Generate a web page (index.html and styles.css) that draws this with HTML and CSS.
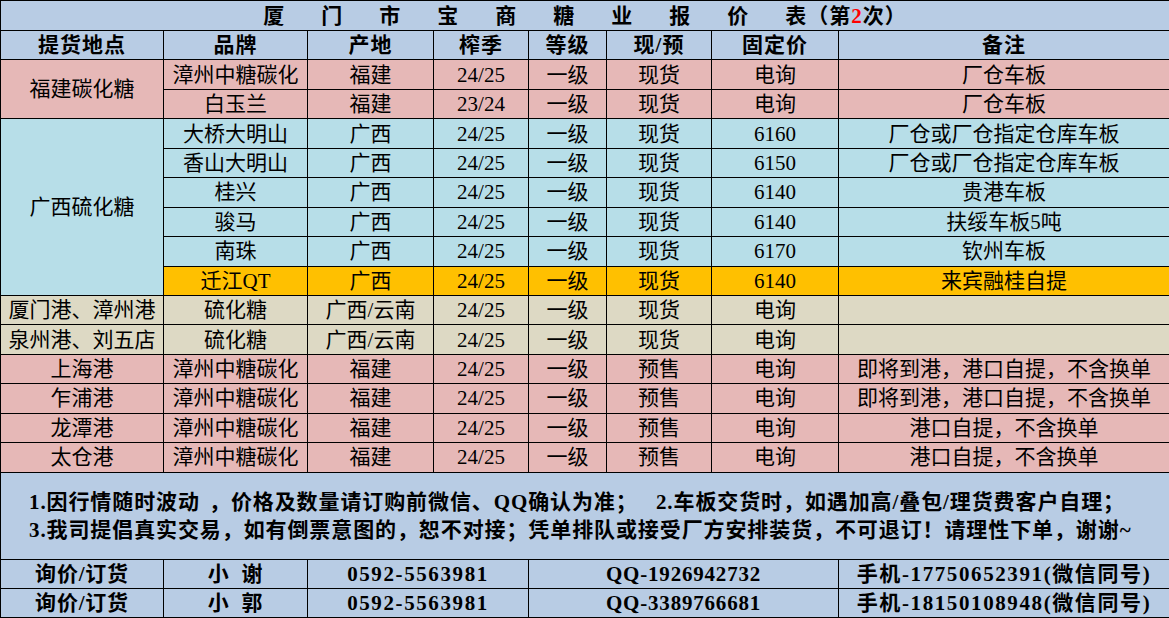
FILE: index.html
```html
<!DOCTYPE html>
<html lang="zh-CN">
<head>
<meta charset="utf-8">
<title>厦门市宝商糖业报价表</title>
<link rel="stylesheet" href="styles.css">
</head>
<body>
<table class="sheet">
  <colgroup>
    <col class="c-place">
    <col class="c-brand">
    <col class="c-origin">
    <col class="c-season">
    <col class="c-grade">
    <col class="c-stock">
    <col class="c-price">
    <col class="c-note">
  </colgroup>
  <tr class="row-title">
    <td colspan="8" class="title"><span class="spaced">厦门市宝商糖业报价</span><span class="tail">表（第<span class="red">2</span>次）</span></td>
  </tr>
  <tr class="row head">
    <th>提货地点</th><th>品牌</th><th>产地</th><th>榨季</th><th>等级</th><th>现/预</th><th>固定价</th><th>备注</th>
  </tr>
  <tr class="row pink">
    <td rowspan="2">福建碳化糖</td><td>漳州中糖碳化</td><td>福建</td><td>24/25</td><td>一级</td><td>现货</td><td>电询</td><td>厂仓车板</td>
  </tr>
  <tr class="row pink">
    <td>白玉兰</td><td>福建</td><td>23/24</td><td>一级</td><td>现货</td><td>电询</td><td>厂仓车板</td>
  </tr>
  <tr class="row cyan">
    <td rowspan="6">广西硫化糖</td><td>大桥大明山</td><td>广西</td><td>24/25</td><td>一级</td><td>现货</td><td>6160</td><td>厂仓或厂仓指定仓库车板</td>
  </tr>
  <tr class="row cyan">
    <td>香山大明山</td><td>广西</td><td>24/25</td><td>一级</td><td>现货</td><td>6150</td><td>厂仓或厂仓指定仓库车板</td>
  </tr>
  <tr class="row cyan">
    <td>桂兴</td><td>广西</td><td>24/25</td><td>一级</td><td>现货</td><td>6140</td><td>贵港车板</td>
  </tr>
  <tr class="row cyan">
    <td>骏马</td><td>广西</td><td>24/25</td><td>一级</td><td>现货</td><td>6140</td><td>扶绥车板5吨</td>
  </tr>
  <tr class="row cyan">
    <td>南珠</td><td>广西</td><td>24/25</td><td>一级</td><td>现货</td><td>6170</td><td>钦州车板</td>
  </tr>
  <tr class="row orange">
    <td>迁江QT</td><td>广西</td><td>24/25</td><td>一级</td><td>现货</td><td>6140</td><td>来宾融桂自提</td>
  </tr>
  <tr class="row beige">
    <td>厦门港、漳州港</td><td>硫化糖</td><td>广西/云南</td><td>24/25</td><td>一级</td><td>现货</td><td>电询</td><td></td>
  </tr>
  <tr class="row beige">
    <td>泉州港、刘五店</td><td>硫化糖</td><td>广西/云南</td><td>24/25</td><td>一级</td><td>现货</td><td>电询</td><td></td>
  </tr>
  <tr class="row pink">
    <td>上海港</td><td>漳州中糖碳化</td><td>福建</td><td>24/25</td><td>一级</td><td>预售</td><td>电询</td><td>即将到港，港口自提，不含换单</td>
  </tr>
  <tr class="row pink">
    <td>乍浦港</td><td>漳州中糖碳化</td><td>福建</td><td>24/25</td><td>一级</td><td>预售</td><td>电询</td><td>即将到港，港口自提，不含换单</td>
  </tr>
  <tr class="row pink">
    <td>龙潭港</td><td>漳州中糖碳化</td><td>福建</td><td>24/25</td><td>一级</td><td>预售</td><td>电询</td><td>港口自提，不含换单</td>
  </tr>
  <tr class="row pink">
    <td>太仓港</td><td>漳州中糖碳化</td><td>福建</td><td>24/25</td><td>一级</td><td>预售</td><td>电询</td><td>港口自提，不含换单</td>
  </tr>
  <tr class="row-notes">
    <td colspan="8" class="notes">
      <p>1.因行情随时波动 ，价格及数量请订购前微信、QQ确认为准；  2.车板交货时，如遇加高/叠包/理货费客户自理；</p>
      <p>3.我司提倡真实交易，如有倒票意图的，恕不对接；凭单排队或接受厂方安排装货，不可退订！请理性下单，谢谢~</p>
    </td>
  </tr>
  <tr class="row foot">
    <td>询价/订货</td><td class="name">小 谢</td><td colspan="2" class="num">0592-5563981</td><td colspan="3">QQ-1926942732</td><td class="num">手机-17750652391(微信同号)</td>
  </tr>
  <tr class="row foot">
    <td>询价/订货</td><td class="name">小 郭</td><td colspan="2" class="num">0592-5563981</td><td colspan="3">QQ-3389766681</td><td class="num">手机-18150108948(微信同号)</td>
  </tr>
</table>
</body>
</html>
```

FILE: styles.css
```css
* { box-sizing: border-box; }

html, body {
  margin: 0;
  padding: 0;
  background: #ffffff;
}

.sheet {
  width: 1169px;
  border-collapse: collapse;
  table-layout: fixed;
  font-family: "Liberation Serif", "Noto Sans CJK SC", serif;
  font-size: 21px;
  color: #000;
}

.c-place { width: 163px; }
.c-brand { width: 144px; }
.c-origin { width: 126px; }
.c-season { width: 95px; }
.c-grade { width: 78px; }
.c-stock { width: 105px; }
.c-price { width: 127px; }
.c-note { width: 331px; }

.sheet td,
.sheet th {
  border: 1px solid #000;
  padding: 0;
  text-align: center;
  vertical-align: middle;
  line-height: 24px;
  white-space: nowrap;
  overflow: hidden;
}

.row td,
.row th {
  height: 29.45px;
}

.row-title td {
  height: 30px;
  background: #b8cce4;
  font-weight: 700;
}

.spaced { letter-spacing: 37px; }
.tail { letter-spacing: 1px; }
.red { color: #ff0000; }

.head th {
  background: #b8cce4;
  font-weight: 700;
  letter-spacing: 1px;
}

.pink td { background: #e6b8b7; }
.cyan td { background: #b7dee8; }
.orange td { background: #ffc000; }
.beige td { background: #ddd9c4; }

.row-notes td {
  height: 87px;
  background: #b8cce4;
  text-align: left;
  padding-left: 28px;
  font-weight: 700;
  letter-spacing: 0.9px;
  word-spacing: 3px;
}

.notes p {
  margin: 0;
  line-height: 28px;
  white-space: pre;
}

.foot td {
  background: #b8cce4;
  font-weight: 700;
  letter-spacing: 0.8px;
}

.foot .num { letter-spacing: 1.6px; }
.foot .name { word-spacing: 6px; }
```
